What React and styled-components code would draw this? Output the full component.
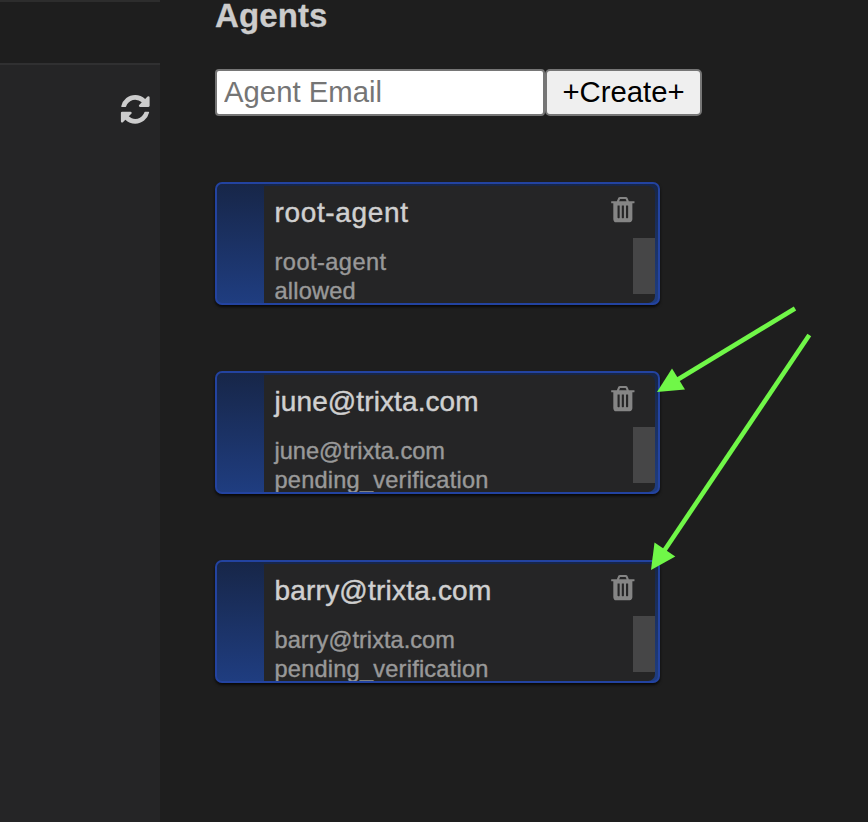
import React from "react";
import styled, { createGlobalStyle } from "styled-components";

const GlobalStyle = createGlobalStyle`
  * { box-sizing: border-box; }
  body {
    margin: 0;
    background: #1e1e1e;
    color: #cccccc;
    font-family: "Liberation Sans", Arial, sans-serif;
    overflow: hidden;
  }
`;

const Page = styled.div`
  position: relative;
  display: flex;
  height: 822px;
  overflow: hidden;
`;

const Sidebar = styled.aside`
  display: flex;
  flex-direction: column;
  width: 160px;
  flex: none;
  background: #252526;
`;

const SidebarHeader = styled.div`
  height: 65px;
  flex: none;
  background: #1e1e1e;
  border-top: 2px solid #2d2d2d;
  border-bottom: 2px solid #303031;
`;

const SidebarTools = styled.div`
  display: flex;
  justify-content: flex-end;
  padding: 27px 8.5px 0 0;
`;

const IconButton = styled.button`
  display: flex;
  padding: 0;
  border: 0;
  background: none;
  color: ${(p) => p.$color};
`;

const Icon = styled.svg`
  display: block;
  width: ${(p) => p.$size}px;
  height: ${(p) => p.$size}px;
  fill: currentColor;
`;

const Main = styled.main`
  flex: 1;
  padding-left: 55px;
`;

const Heading = styled.h2`
  margin: 0;
  height: 69px;
  font-size: 33px;
  line-height: 32px;
  letter-spacing: 0.1px;
  -webkit-text-stroke: 0.3px currentColor;
`;

const CreateForm = styled.form`
  display: flex;
  height: 47px;
  margin-bottom: 66px;
`;

const EmailInput = styled.input`
  width: 330px;
  padding: 0 7px 2px;
  border: 2px solid #767676;
  border-radius: 4px;
  background: #fff;
  font: 29.3px "Liberation Sans", Arial, sans-serif;
  &::placeholder { color: #757575; opacity: 1; }
`;

const CreateButton = styled.button`
  width: 157px;
  padding: 0 0 2px;
  border: 2px solid #767676;
  border-radius: 5px;
  background: #efefef;
  color: #000;
  font: 29.3px "Liberation Sans", Arial, sans-serif;
`;

const AgentList = styled.div`
  display: flex;
  flex-direction: column;
  gap: 66px;
`;

const Card = styled.article`
  display: flex;
  width: 445px;
  height: 123px;
  padding: 2px 3px 0 47px;
  border: 2px solid #2343a0;
  border-radius: 7px;
  background: linear-gradient(#172648, #1f3d80);
  box-shadow: 0 2px 3px rgba(0, 0, 0, 0.75);
  overflow: hidden;
`;

const CardBody = styled.div`
  display: flex;
  flex: 1;
  min-width: 0;
  background: #252526;
  border-radius: 0 7px 7px 0;
  overflow: hidden;
`;

const AgentInfo = styled.div`
  flex: 1;
  padding: 10px 0 0 10.5px;
  white-space: nowrap;
`;

const AgentName = styled.div`
  height: 52px;
  color: #d0d0d0;
  font-size: 28px;
  line-height: 34px;
  letter-spacing: ${(p) => p.$tracking}px;
  -webkit-text-stroke: 0.45px currentColor;
`;

const AgentDetail = styled.div`
  color: #999;
  font-size: 23.6px;
  line-height: 29px;
  letter-spacing: ${(p) => p.$tracking}px;
  -webkit-text-stroke: 0.4px currentColor;
`;

const CardActions = styled.div`
  display: flex;
  flex-direction: column;
  align-items: flex-end;
  width: 46px;
`;

const DeleteSlot = styled.div`
  height: 52px;
  padding: 9px 17.7px 0 0;
`;

const ScrollThumb = styled.div`
  width: 22px;
  height: 56px;
  background: #464647;
`;

const Annotations = styled.svg`
  position: absolute;
  inset: 0;
  pointer-events: none;
`;

const agents = [
  {
    name: "root-agent",
    status: "allowed",
    tracking: { name: 0.65, detail: 0.45, status: 0.2 },
  },
  {
    name: "june@trixta.com",
    status: "pending_verification",
    tracking: { name: 0.1, detail: -0.03, status: 0.21 },
  },
  {
    name: "barry@trixta.com",
    status: "pending_verification",
    tracking: { name: 0.21, detail: 0.03, status: 0.21 },
  },
];

function TrashIcon() {
  return (
    <Icon $size={29.7} viewBox="0 12 1792 1792">
      <path d="M704 1376v-704q0-14-9-23t-23-9h-64q-14 0-23 9t-9 23v704q0 14 9 23t23 9h64q14 0 23-9t9-23zm256 0v-704q0-14-9-23t-23-9h-64q-14 0-23 9t-9 23v704q0 14 9 23t23 9h64q14 0 23-9t9-23zm256 0v-704q0-14-9-23t-23-9h-64q-14 0-23 9t-9 23v704q0 14 9 23t23 9h64q14 0 23-9t9-23zm-544-992h448l-48-117q-7-9-17-11h-317q-10 2-17 11zm928 32v64q0 14-9 23t-23 9h-96v948q0 83-47 143.500t-113 60.500h-832q-66 0-113-58.500t-47-141.500v-952h-96q-14 0-23-9t-9-23v-64q0-14 9-23t23-9h309l70-167q15-37 54-63t79-26h320q40 0 79 26t54 63l70 167h309q14 0 23 9t9 23z" />
    </Icon>
  );
}

function RefreshIcon() {
  return (
    <Icon $size={33.5} viewBox="-27 -32 1792 1792">
      <path d="M1639 1056q0 5-1 7-64 268-268 434.500t-478 166.500q-146 0-282.500-55t-243.500-157l-129 129q-19 19-45 19t-45-19-19-45v-448q0-26 19-45t45-19h448q26 0 45 19t19 45-19 45l-137 137q71 66 161 102t187 36q134 0 250-65t186-179q11-17 53-117 8-23 30-23h192q13 0 22.500 9.500t9.500 22.500zm25-800v448q0 26-19 45t-45 19h-448q-26 0-45-19t-19-45 19-45l138-138q-148-137-349-137-134 0-250 65t-186 179q-11 17-53 117-8 23-30 23h-199q-13 0-22.500-9.500t-9.500-22.500v-7q65-268 270-434.500t480-166.500q146 0 284 55.500t245 156.500l130-129q19-19 45-19t45 19 19 45z" />
    </Icon>
  );
}

function AgentCard({ name, status, tracking }) {
  return (
    <Card>
      <CardBody>
        <AgentInfo>
          <AgentName $tracking={tracking.name}>{name}</AgentName>
          <AgentDetail $tracking={tracking.detail}>{name}</AgentDetail>
          <AgentDetail $tracking={tracking.status}>{status}</AgentDetail>
        </AgentInfo>
        <CardActions>
          <DeleteSlot>
            <IconButton $color="#858585" aria-label="Delete agent">
              <TrashIcon />
            </IconButton>
          </DeleteSlot>
          <ScrollThumb />
        </CardActions>
      </CardBody>
    </Card>
  );
}

export default function App() {
  return (
    <Page>
      <GlobalStyle />
      <Sidebar>
        <SidebarHeader />
        <SidebarTools>
          <IconButton $color="#cccccc" aria-label="Refresh">
            <RefreshIcon />
          </IconButton>
        </SidebarTools>
      </Sidebar>
      <Main>
        <Heading>Agents</Heading>
        <CreateForm>
          <EmailInput placeholder="Agent Email" />
          <CreateButton type="button">+Create+</CreateButton>
        </CreateForm>
        <AgentList>
          {agents.map((agent) => (
            <AgentCard key={agent.name} {...agent} />
          ))}
        </AgentList>
      </Main>
      <Annotations width="868" height="822" viewBox="0 0 868 822">
        <g stroke="#70f748" strokeWidth="4.6">
          <path d="M795 308.5L677 380" />
          <path d="M809.3 335L664 551" />
        </g>
        <g fill="#70f748">
          <path d="M657 392L672 368.5L685 389.5Z" />
          <path d="M651 570L654.500 542.500L675.300 556.500Z" />
        </g>
      </Annotations>
    </Page>
  );
}
